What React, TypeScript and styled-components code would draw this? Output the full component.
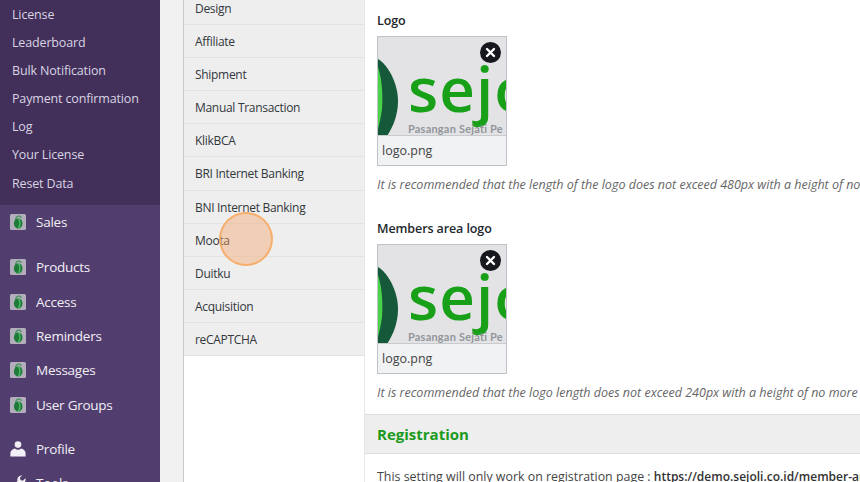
import React from "react";
import styled, { createGlobalStyle } from "styled-components";

const Global = createGlobalStyle`
  html, body { margin: 0; padding: 0; width: 860px; height: 482px; overflow: hidden; background: #f1f1f1; }
  body { font-family: "Open Sans", "Noto Sans", "Liberation Sans", sans-serif; }
  * { box-sizing: border-box; }
`;

const Page = styled.div`
  position: relative;
  display: flex;
  width: 860px;
  height: 482px;
  overflow: hidden;
`;

const Sidebar = styled.nav`
  flex: 0 0 160px;
  background: #523e6e;
  color: #f0edf4;
  overflow: hidden;
`;

const SubMenu = styled.div`
  height: 205px;
  padding-top: 1px;
  background: #42305a;
`;

const SubItem = styled.div`
  height: 28.1px;
  line-height: 28px;
  padding-left: 12px;
  font-size: 12.5px;
  letter-spacing: -0.15px;
  color: #d9d3e2;
  white-space: nowrap;
`;

const MenuGroup = styled.div<{ $gap: number }>`
  margin-bottom: ${(p) => p.$gap}px;
`;

const MenuItem = styled.div`
  display: flex;
  align-items: center;
  height: 34.3px;
  padding-left: 10px;
  font-size: 13.5px;
  letter-spacing: -0.25px;
  color: #f1eef5;
  white-space: nowrap;
`;

const MenuIcon = styled.span`
  flex: 0 0 16px;
  width: 16px;
  height: 16px;
  margin-right: 10px;
  display: flex;
  svg { display: block; }
`;

const Gutter = styled.div`
  flex: 0 0 23px;
  background: #f1f1f1;
`;

const Tabs = styled.div`
  flex: 0 0 182px;
  background: #fff;
  border-left: 1px solid #c9c9c9;
  border-right: 1px solid #e6e6e6;
`;

const TabList = styled.div`
  margin-top: -8px;
  background: #eeeeee;
`;

const Tab = styled.div`
  height: 33.1px;
  line-height: 33px;
  padding-left: 11px;
  font-size: 12px;
  letter-spacing: -0.3px;
  color: #32373c;
  border-bottom: 1px solid #e3e3e3;
  white-space: nowrap;
`;

const Content = styled.main`
  flex: 1 1 auto;
  min-width: 0;
  background: #fff;
  overflow: hidden;
  color: #444;
`;

const Field = styled.section`
  padding: 0 0 0 12px;
  white-space: nowrap;
`;

const Label = styled.div<{ $top: number }>`
  padding-top: ${(p) => p.$top}px;
  margin-bottom: 4px;
  height: ${(p) => p.$top + 23}px;
  line-height: 23px;
  font-size: 12.5px;
  letter-spacing: -0.1px;
  font-weight: 600;
  color: #23282d;
`;

const Thumb = styled.div`
  position: relative;
  width: 130px;
  height: 130px;
  border: 1px solid #bfc2c6;
  background: #e4e4e6;
  display: flex;
  flex-direction: column;
`;

const ThumbImage = styled.div`
  height: 99px;
  overflow: hidden;
  svg { display: block; }
`;

const ThumbName = styled.div`
  flex: 1;
  padding-left: 4px;
  line-height: 29px;
  font-size: 12.5px;
  color: #444;
  background: #f1f2f4;
  border-top: 1px solid #c8cacd;
`;

const RemoveButton = styled.span`
  position: absolute;
  top: 4.5px;
  right: 5px;
  width: 21px;
  height: 21px;
  border-radius: 50%;
  background: #16181d;
  display: flex;
  align-items: center;
  justify-content: center;
`;

const Help = styled.p`
  margin: 9px 0 0;
  height: 20px;
  line-height: 20px;
  font-size: 12.5px;
  font-style: italic;
  color: #666;
`;

const SectionHeader = styled.h2`
  margin: 11px 0 0;
  height: 40px;
  line-height: 39px;
  padding-left: 12px;
  font-size: 15px;
  font-weight: 700;
  color: #1c9a1c;
  background: #eeeeee;
  border-top: 1px solid #dedede;
  border-bottom: 1px solid #dedede;
`;

const Paragraph = styled.p`
  margin: 13px 0 0 12px;
  line-height: 20px;
  font-size: 12.4px;
  color: #444;
  white-space: nowrap;
  strong { font-size: 12px; font-weight: 600; color: #333; }
`;

const Cursor = styled.div`
  position: absolute;
  left: 219px;
  top: 212px;
  width: 54px;
  height: 54px;
  border-radius: 50%;
  background: rgba(245, 165, 105, 0.42);
  border: 2px solid rgba(247, 170, 100, 0.9);
`;

const PluginIcon = () => (
  <svg width="16" height="16" viewBox="0 0 16 16">
    <rect width="16" height="16" rx="1.5" fill="#b3aebb" />
    <ellipse cx="8.2" cy="9.4" rx="4.3" ry="5.2" fill="#1f7a3a" />
    <path d="M8.2 4.6c2 1.3 2.4 6 .4 9.6" stroke="#4fc06a" strokeWidth="1.3" fill="none" />
    <path d="M5.6 6.2C5.6 3.6 7 2 9 2c1.3 0 2 .8 2.3 1.8" stroke="#2b8c45" strokeWidth="1.1" fill="none" />
  </svg>
);

const UserIcon = () => (
  <svg width="16" height="16" viewBox="0 0 16 16" fill="#f3eff6">
    <circle cx="8" cy="3.6" r="3.3" />
    <path d="M0.4 15.5v-3.2C.4 9.4 3 7.8 4.9 7.4c1 .9 2 1.3 3.1 1.3s2.100-.4 3.100-1.300c1.900.4 4.500 2 4.500 4.900v3.200z" />
  </svg>
);

const ToolsIcon = () => (
  <svg width="16" height="16" viewBox="0 0 16 16" fill="#f3eff6">
    <path d="M11.500 0.500a4.200 4.200 0 0 0-4 5.500L1 12.500 3.500 15 10 8.500a4.200 4.200 0 0 0 5.400-5.300l-2.600 2.500-2.300-.6-.6-2.300 2.500-2.500c-.1 0-.3.200-.4.200z" />
  </svg>
);

const CloseGlyph = () => (
  <svg width="11" height="11" viewBox="0 0 11 11">
    <path d="M2 2l7 7M9 2l-7 7" stroke="#fff" strokeWidth="2.400" strokeLinecap="round" />
  </svg>
);

const LogoArt = () => (
  <svg width="128" height="99" viewBox="0 0 128 99">
    <rect width="128" height="99" fill="#e3e3e5" />
    <path d="M0 22C10 28 20 46 20 64C20 78 15 90 9 99H0Z" fill="#15593a" />
    <path d="M0 30C4 42 5 58 4 72C3 80 1 88 0 92Z" fill="#49d24a" />
    <text x="30" y="75" fontFamily="'Open Sans', sans-serif" fontSize="62" fontWeight="600" letterSpacing="1" fill="#18a018">sejo</text>
    <text x="30" y="96" fontFamily="Lato, sans-serif" fontSize="11" fontWeight="700" letterSpacing="0.2" fill="#92959a">Pasangan Sejati Pe</text>
  </svg>
);

const subItems = ["License", "Leaderboard", "Bulk Notification", "Payment confirmation", "Log", "Your License", "Reset Data"];
const tabs = ["Design", "Affiliate", "Shipment", "Manual Transaction", "KlikBCA", "BRI Internet Banking", "BNI Internet Banking", "Moota", "Duitku", "Acquisition", "reCAPTCHA"];
const pluginItems = ["Products", "Access", "Reminders", "Messages", "User Groups"];

const LogoThumb = () => (
  <Thumb>
    <ThumbImage><LogoArt /></ThumbImage>
    <ThumbName>logo.png</ThumbName>
    <RemoveButton><CloseGlyph /></RemoveButton>
  </Thumb>
);

export default function App() {
  return (
    <Page>
      <Global />
      <Sidebar>
        <SubMenu>
          {subItems.map((s) => <SubItem key={s}>{s}</SubItem>)}
        </SubMenu>
        <MenuGroup $gap={11}>
          <MenuItem><MenuIcon><PluginIcon /></MenuIcon>Sales</MenuItem>
        </MenuGroup>
        <MenuGroup $gap={10}>
          {pluginItems.map((s) => (
            <MenuItem key={s}><MenuIcon><PluginIcon /></MenuIcon>{s}</MenuItem>
          ))}
        </MenuGroup>
        <MenuItem><MenuIcon><UserIcon /></MenuIcon>Profile</MenuItem>
        <MenuItem><MenuIcon><ToolsIcon /></MenuIcon>Tools</MenuItem>
      </Sidebar>
      <Gutter />
      <Tabs>
        <TabList>
          {tabs.map((t) => <Tab key={t}>{t}</Tab>)}
        </TabList>
      </Tabs>
      <Content>
        <Field>
          <Label $top={9}>Logo</Label>
          <LogoThumb />
          <Help>It is recommended that the length of the logo does not exceed 480px with a height of no more than 100px</Help>
        </Field>
        <Field>
          <Label $top={22}>Members area logo</Label>
          <LogoThumb />
          <Help>It is recommended that the logo length does not exceed 240px with a height of no more than 100px</Help>
        </Field>
        <SectionHeader>Registration</SectionHeader>
        <Paragraph>This setting will only work on registration page : <strong>https://demo.sejoli.co.id/member-area/register</strong></Paragraph>
      </Content>
      <Cursor />
    </Page>
  );
}
